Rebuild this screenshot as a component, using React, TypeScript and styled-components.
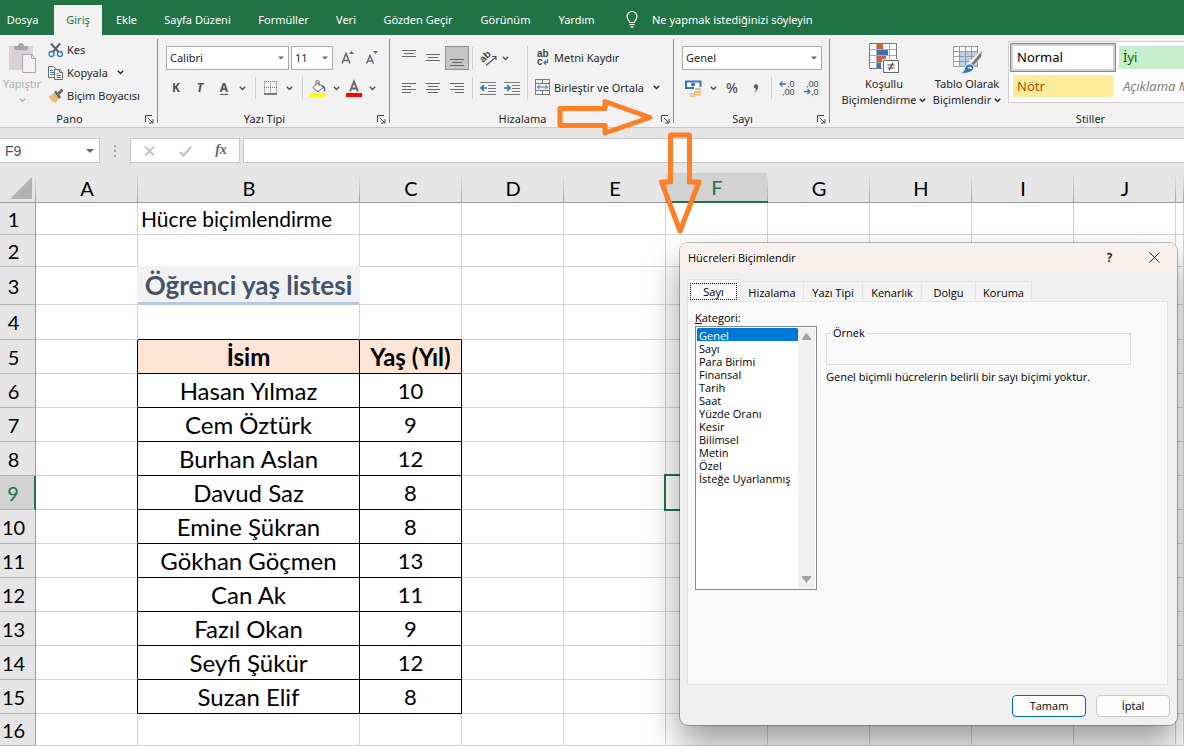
import React from 'react';
import styled, { createGlobalStyle, css } from 'styled-components';

const UI = '"Open Sans", "Noto Sans", sans-serif';
const RIBBON = '"Noto Sans", "Open Sans", sans-serif';
const SHEET = 'Lato, "Open Sans", sans-serif';
const GREEN = '#217346';

const Global = createGlobalStyle`
  *, *::before, *::after { box-sizing: border-box; }
  body { margin: 0; background: #e6e6e6; font-family: ${UI}; font-size: 11px; color: #262626; }
  button, input, select { font: inherit; color: inherit; }
  svg { display: block; flex: none; overflow: visible; }
`;

const Page = styled.div`
  position: relative;
  display: flex;
  flex-direction: column;
  min-height: 100vh;
  overflow: hidden;
`;

/* Menu tabs */
const TabBar = styled.nav`
  display: flex;
  align-items: flex-end;
  height: 35px;
  background: ${GREEN};
  color: #fff;
  font-family: ${RIBBON};
`;
const Tab = styled.button<{ $w: number; $active?: boolean; $first?: boolean }>`
  width: ${p => p.$w}px;
  height: 30px;
  margin-right: ${p => (p.$first ? 9 : 0)}px;
  padding: 0 0 2px;
  border: 0;
  flex: none;
  white-space: nowrap;
  text-align: center;
  background: ${p => (p.$active ? '#f2f2f2' : 'transparent')};
  color: ${p => (p.$active ? GREEN : '#fff')};
`;
const TellMe = styled.button`
  display: flex;
  align-items: center;
  gap: 14px;
  height: 30px;
  margin-left: 17px;
  padding: 0 0 2px;
  border: 0;
  background: none;
  color: #fff;
  white-space: nowrap;
`;

/* Ribbon */
const Ribbon = styled.section`
  display: flex;
  height: 93px;
  background: #f2f2f2;
  border-bottom: 1px solid #c9c9c9;
  font-family: ${RIBBON};
  overflow: hidden;
`;
const Group = styled.div<{ $w: number }>`
  display: flex;
  flex-direction: column;
  flex: none;
  width: ${p => p.$w}px;
  padding-top: 4px;
`;
const GroupBody = styled.div<{ $pad?: number }>`
  display: flex;
  height: 72px;
  padding-left: ${p => p.$pad ?? 0}px;
`;
const GroupFoot = styled.div`
  display: flex;
  align-items: center;
  height: 16px;
  padding-right: 3px;
  line-height: 16px;
`;
const GroupName = styled.span`
  flex: 1;
  padding-right: 6px;
  text-align: center;
`;
const GroupLine = styled.div`
  flex: none;
  width: 1px;
  margin: 4px 0;
  background: #8c8c8c;
`;
const Rows = styled.div`
  display: flex;
  flex-direction: column;
  gap: 6px;
  padding-top: 7px;
`;
const Row = styled.div<{ $pad?: number }>`
  display: flex;
  align-items: center;
  height: 24px;
  padding-left: ${p => p.$pad ?? 0}px;
`;
const ToolButton = styled.button<{ $w?: number; $on?: boolean }>`
  display: flex;
  align-items: center;
  justify-content: center;
  flex: none;
  width: ${p => p.$w ?? 24}px;
  height: 24px;
  padding: 0;
  border: 1px solid ${p => (p.$on ? '#8f8f8f' : 'transparent')};
  background: ${p => (p.$on ? '#c6c6c6' : 'none')};
  color: #505050;
`;
const Glyph = styled.span<{ $italic?: boolean; $line?: boolean; $light?: boolean }>`
  font-size: ${p => (p.$light ? 14 : 12)}px;
  line-height: 16px;
  font-weight: ${p => (p.$light ? 500 : 700)};
  font-style: ${p => (p.$italic ? 'italic' : 'normal')};
  ${p => p.$line && css`height: 14px; line-height: 13px; border-bottom: 1px solid #505050;`}
`;
const ThinLine = styled.div<{ $tall?: boolean }>`
  flex: none;
  width: 1px;
  height: ${p => (p.$tall ? 54 : 22)}px;
  margin: ${p => (p.$tall ? '7px 7px 0 3px' : '0 3px')};
  background: #d0d0d0;
`;
const Spacer = styled.div`
  width: 4px;
`;
const TextButton = styled.button<{ $h?: number }>`
  display: flex;
  align-items: center;
  gap: 3px;
  height: ${p => p.$h ?? 24}px;
  padding: 0 0 2px;
  border: 0;
  background: none;
  white-space: nowrap;
`;
const ChevronSlot = styled.span`
  margin-left: 6px;
`;
const BigButton = styled.button<{ $w: number; $muted?: boolean }>`
  display: flex;
  flex-direction: column;
  align-items: center;
  flex: none;
  width: ${p => p.$w}px;
  height: 72px;
  padding: 4px 0 0;
  border: 0;
  background: none;
  line-height: 16px;
  white-space: nowrap;
  color: ${p => (p.$muted ? '#b1b1b1' : 'inherit')};
  & > svg { margin-bottom: 2px; }
`;
const BigLine = styled.span`
  display: flex;
  align-items: center;
  gap: 3px;
  height: 16px;
`;
const ClipColumn = styled.div`
  display: flex;
  flex-direction: column;
  padding-left: 4px;
`;

/* Drop-downs */
const SelectWrap = styled.span<{ $w: number }>`
  display: grid;
  align-items: center;
  flex: none;
  width: ${p => p.$w}px;
  height: 24px;
  margin-right: 2px;
  border: 1px solid #ababab;
  background: #fff;
  & > * { grid-area: 1 / 1; }
  & > svg { justify-self: end; margin-right: 4px; pointer-events: none; }
`;
const PlainSelect = styled.select`
  appearance: none;
  width: 100%;
  height: 22px;
  padding: 0 3px 2px;
  border: 0;
  background: none;
  outline: none;
`;

/* Style gallery */
const Gallery = styled.div`
  display: grid;
  grid-template-columns: 106px 1fr;
  grid-template-rows: 29px 28px;
  flex: 1;
  height: 62px;
  margin: 2px 0 0 3px;
  padding: 1px;
  border: 1px solid #d0d0d0;
  background: #fff;
`;
const StyleCell = styled.button<{ $bg: string; $fg: string; $picked?: boolean; $italic?: boolean }>`
  margin: ${p => (p.$picked ? '0' : '3px')};
  padding: 0 0 1px 4px;
  border: 0;
  background: ${p => p.$bg};
  color: ${p => p.$fg};
  font-size: 13px;
  line-height: 18px;
  font-style: ${p => (p.$italic ? 'italic' : 'normal')};
  text-align: left;
  white-space: nowrap;
  ${p => p.$picked && css`
    border: 1px solid #8a8a8a;
    box-shadow: inset 0 0 0 2px #d0d0d0;
    padding-left: 6px;
  `}
`;

/* Formula bar */
const FormulaBar = styled.div`
  display: flex;
  align-items: flex-start;
  height: 45px;
  padding-top: 10px;
  background: #e6e6e6;
`;
const NameBox = styled.label`
  display: grid;
  align-items: center;
  width: 100px;
  height: 25px;
  border: 1px solid #c6c6c6;
  border-left: 0;
  background: #fff;
  & > * { grid-area: 1 / 1; }
  & > svg { justify-self: end; margin-right: 5px; }
`;
const NameInput = styled.input`
  width: 100%;
  padding: 0 5px;
  border: 0;
  outline: 0;
  background: none;
  font-family: "Liberation Sans", sans-serif;
  font-size: 14px;
  color: #505050;
`;
const Grip = styled.div`
  display: flex;
  justify-content: center;
  align-items: center;
  width: 30px;
  height: 25px;
`;
const FormulaTools = styled.div`
  display: flex;
  justify-content: space-around;
  width: 110px;
  height: 25px;
  margin-right: 3px;
  border: 1px solid #c6c6c6;
  background: #fff;
`;
const FormulaInput = styled.input`
  flex: 1;
  min-width: 0;
  height: 25px;
  border: 1px solid #c6c6c6;
  border-right: 0;
  background: #fff;
  outline: 0;
`;
const Fx = styled.span`
  padding-bottom: 2px;
  font: italic 700 14px/18px "Liberation Serif", serif;
  color: #666;
`;

/* Sheet */
const Sheet = styled.table`
  width: 100%;
  table-layout: fixed;
  border-collapse: separate;
  border-spacing: 0;
  background: #fff;
  font-family: ${SHEET};
  font-size: 22px;
  line-height: 28px;
  color: #000;
`;
const Col = styled.col<{ $w?: number }>`
  width: ${p => (p.$w ? `${p.$w}px` : 'auto')};
`;
const ColHead = styled.th<{ $on?: boolean }>`
  height: 30px;
  padding: 0;
  font-size: 20px;
  font-weight: 400;
  background: linear-gradient(#e6e6e6, #a6a6a6) right / 1px 100% no-repeat ${p => (p.$on ? '#d2d2d2' : '#e6e6e6')};
  border-bottom: ${p => (p.$on ? `2px solid ${GREEN}` : '1px solid #9b9b9b')};
  color: ${p => (p.$on ? GREEN : '#000')};
`;
const Corner = styled.td`
  padding: 0 0 3px 10px;
  vertical-align: bottom;
  background: linear-gradient(#e6e6e6, #a6a6a6) right / 1px 100% no-repeat #e6e6e6;
  border-bottom: 1px solid #9b9b9b;
`;
const RowHead = styled.th<{ $on?: boolean }>`
  padding: 0 8px 0 0;
  font-size: 20px;
  font-weight: 400;
  vertical-align: middle;
  background: ${p => (p.$on ? '#d2d2d2' : '#e6e6e6')};
  border-right: ${p => (p.$on ? `2px solid ${GREEN}` : '1px solid #9b9b9b')};
  border-bottom: 1px solid #b5b5b5;
  color: ${p => (p.$on ? GREEN : '#000')};
`;
const SheetRow = styled.tr<{ $h: number }>`
  height: ${p => p.$h}px;
`;
type Kind = 'plain' | 'text' | 'title' | 'head' | 'name' | 'age' | 'above' | 'beside' | 'clear' | 'clearUp' | 'active';
const kinds = {
  plain: css``,
  text: css`padding-left: 3px; text-align: left; font-size: 21px;`,
  title: css`
    background: #f2f2f2;
    border-right-color: #f2f2f2;
    border-bottom: 3px solid #b4c9e2;
    color: #44546a;
    font-size: 26px;
    font-weight: 700;
  `,
  head: css`background: #fce4d6; border-color: #000; font-size: 24px; font-weight: 700;`,
  name: css`border-color: #000; font-size: 24px;`,
  age: css`border-color: #000;`,
  above: css`border-bottom-color: #000;`,
  beside: css`border-right-color: #000;`,
  clear: css`border-right-color: #f2f2f2;`,
  clearUp: css`border-bottom-color: #f2f2f2;`,
  active: css`
    position: relative;
    &::after {
      content: '';
      position: absolute;
      inset: -2px;
      border: 2px solid ${GREEN};
    }
  `,
};
const Cell = styled.td<{ $kind: Kind }>`
  padding: 0;
  border: 0 solid #d4d4d4;
  border-right-width: 1px;
  border-bottom-width: 1px;
  text-align: center;
  white-space: nowrap;
  ${p => kinds[p.$kind]}
`;

/* Dialog */
const Dialog = styled.section`
  position: absolute;
  top: 243px;
  left: 680px;
  display: flex;
  flex-direction: column;
  width: 497px;
  height: 482px;
  border-radius: 8px;
  background: #f0f0f0;
  color: #000;
  box-shadow: 0 0 0 1px rgba(0, 0, 0, 0.25), 0 18px 34px rgba(0, 0, 0, 0.4);
  overflow: clip;
`;
const DialogTitle = styled.header`
  display: flex;
  align-items: center;
  height: 30px;
  padding: 0 0 2px 8px;
  background: #f9f1ed;
`;
const TitleText = styled.h2`
  flex: 1;
  margin: 0;
  font-size: 11px;
  font-weight: 400;
`;
const TitleButton = styled.button`
  display: flex;
  align-items: center;
  justify-content: center;
  width: 45px;
  height: 28px;
  padding: 0;
  border: 0;
  background: none;
  font-weight: 600;
  font-size: 12px;
`;
const DialogTabs = styled.div`
  display: flex;
  align-items: flex-end;
  height: 28px;
  padding-left: 7px;
`;
const DialogTab = styled.button<{ $w: number; $on?: boolean }>`
  width: ${p => p.$w}px;
  height: ${p => (p.$on ? 22 : 20)}px;
  padding: ${p => (p.$on ? '2px 3px 1px 2px' : '2px 0 0')};
  border: 1px solid #e5e5e5;
  border-bottom: 0;
  border-left-width: ${p => (p.$on ? 1 : 0)}px;
  background: ${p => (p.$on ? '#f9f9f9' : '#f3f3f3')};
`;
const FocusRing = styled.span`
  display: block;
  height: 17px;
  line-height: 15px;
  border: 1px dotted #000;
`;
const Panel = styled.div`
  display: flex;
  flex: 1;
  gap: 9px;
  margin: 0 9px 0 7px;
  padding: 8px 7px;
  border: 1px solid #e2e2e2;
  background: #f9f9f9;
`;
const ListColumn = styled.div`
  display: flex;
  flex-direction: column;
  width: 122px;
  flex: none;
`;
const ListLabel = styled.label`
  line-height: 16px;
  &::first-letter { text-decoration: underline; }
`;
const ListFrame = styled.div`
  display: flex;
  height: 264px;
  padding: 1px;
  border: 1px solid #828790;
  background: #fff;
`;
const ListBox = styled.select`
  flex: 1;
  min-width: 0;
  height: 260px;
  padding: 0;
  border: 0;
  outline: 0;
  background: #fff;
  overflow: hidden;
  scrollbar-width: none;
`;
const ListItem = styled.option`
  min-height: 13px;
  height: 13px;
  padding: 0 2px;
  line-height: 13px;
  &:checked { background: #0078d7 linear-gradient(#0078d7, #0078d7); color: #fff; }
`;
const ScrollTrack = styled.div`
  display: flex;
  flex-direction: column;
  justify-content: space-between;
  align-items: center;
  width: 17px;
  padding: 5px 0;
  background: #f0f0f0;
`;
const Side = styled.div`
  flex: 1;
  padding-top: 15px;
`;
const Sample = styled.fieldset`
  width: 305px;
  height: 40px;
  margin: 0;
  padding: 0 4px;
  border: 1px solid #dcdcdc;
`;
const SampleName = styled.legend`
  padding: 0 2px;
  line-height: 16px;
`;
const Note = styled.p`
  margin: 4px 0 0;
  line-height: 16px;
  white-space: nowrap;
`;
const DialogFoot = styled.footer`
  display: flex;
  justify-content: flex-end;
  align-items: flex-start;
  gap: 10px;
  height: 40px;
  padding: 10px 7px 0 0;
`;
const DialogButton = styled.button<{ $primary?: boolean }>`
  width: 74px;
  height: 22px;
  padding: 0 0 2px;
  border: 1px solid ${p => (p.$primary ? '#0067c0' : '#c8c8c8')};
  border-radius: 4px;
  background: #fdfdfd;
`;
const Arrows = styled.svg`
  position: absolute;
  top: 0;
  left: 0;
  pointer-events: none;
`;

const Chevron = () => (
  <svg width="7" height="5" viewBox="0 0 7 5" fill="none" stroke="currentColor" strokeWidth="1.4">
    <path d="M.8.8 3.5 3.5 6.2.8" />
  </svg>
);
const Caret = ({ size = 7 }: { size?: number }) => (
  <svg width={size} height="4" viewBox="0 0 8 4"><path d="M0 0h8L4 4z" fill="#666" /></svg>
);
const Launcher = ({ label }: { label: string }) => (
  <ToolButton $w={9} aria-label={label}>
    <svg width="9" height="9" viewBox="0 0 9 9" fill="none" stroke="#444">
      <path d="M.5 7V.5H7M3 3l4.5 4.5M8 4v4H4" />
    </svg>
  </ToolButton>
);
const Lines = ({ xs, top }: { xs: [number, number][]; top: number }) => (
  <svg width="16" height="16" viewBox="0 0 16 16" stroke="#666">
    {xs.map(([a, b], i) => <path key={i} d={`M${a} ${top + i * 3 + 0.5}H${b}`} />)}
  </svg>
);
const Indent = ({ out }: { out?: boolean }) => (
  <svg width="16" height="14" viewBox="0 0 16 14" fill="none">
    <path d="M0 1.500h16M8 4.500h8M8 7.500h8M8 10.500h8M0 13.500h16" stroke="#777" />
    <path d={out ? 'M7 7H2M4 4 1 7l3 3' : 'M0 7h5M3 4l3 3-3 3'} stroke="#2e75b6" strokeWidth="1.7" />
  </svg>
);
const small = { fontFamily: '"Liberation Sans", sans-serif', fill: '#444' };

const PasteIcon = () => (
  <svg width="30" height="31" viewBox="0 0 30 31">
    <path d="M2 3h24v24H2z" fill="#d9d3d8" />
    <path d="M7 3h4c0-4 6-4 6 0h4v4H7z" fill="#a9a6aa" />
    <path d="M15.500 11.500h9l4 4v14h-13z" fill="#f4f1f5" stroke="#a9a6aa" />
    <path d="M24.500 11.500v4h4" fill="none" stroke="#a9a6aa" />
  </svg>
);
const CutIcon = () => (
  <svg width="16" height="16" viewBox="0 0 16 16" fill="none">
    <path d="M3 1.500 10.500 10M12 1.500 5 10" stroke="#666" strokeWidth="2.200" />
    <circle cx="3.500" cy="12" r="2.500" stroke="#3a74b5" strokeWidth="1.300" />
    <circle cx="12" cy="12" r="2.500" stroke="#3a74b5" strokeWidth="1.300" />
  </svg>
);
const CopyIcon = () => (
  <svg width="16" height="16" viewBox="0 0 16 16" fill="#fff">
    <path d="M.5 1.500h5l3 3v8h-8z" stroke="#666" />
    <path d="M2 5.500h3M2 7.500h4M2 9.500h4" stroke="#3a74b5" />
    <path d="M6.500 4.500h5l3 3v7h-8z" stroke="#666" />
    <path d="M11.500 4.500v3h3" stroke="#666" fill="none" />
    <path d="M8.500 8.500h2M8.500 10.500h4.500M8.500 12.500h4.500" stroke="#3a74b5" />
  </svg>
);
const BrushIcon = () => (
  <svg width="16" height="16" viewBox="0 0 16 16">
    <path d="M1 8.500 6 5l5 5.500L8 14.500c-3 0-6-2.500-7-6z" fill="#e8bd7c" />
    <path d="m6 4 2-1.500L13 9l-2 2z" fill="#666" />
    <path d="m9.500 4.500 4-4 2 2-4 4.500z" fill="#666" />
  </svg>
);
const BorderIcon = () => (
  <svg width="14" height="14" viewBox="0 0 14 14" fill="none" stroke="#777">
    <path d="M.5.5v12M6.500.5v12M12.500.5v12M0 .5h13M0 6.500h13" strokeDasharray="1 1" />
    <path d="M0 13h13" stroke="#555" strokeWidth="1.500" />
  </svg>
);
const FillIcon = () => (
  <svg width="17" height="17" viewBox="0 0 17 17" fill="none">
    <path d="M8 2.500 13 7.500 8 12 3 7.500z" fill="#fff" stroke="#666" />
    <path d="M6 5V1.500c0-1.500 3-1.500 3 0V6" stroke="#666" />
    <path d="M11 5c3 0 5 2 4.500 6-.5 1-1.500.5-1.500-.5 0-2-1-3-3-5.500z" fill="#3a74b5" />
    <path d="M0 13h16v4H0z" fill="#ffff00" />
  </svg>
);
const FontColorIcon = () => (
  <svg width="16" height="17" viewBox="0 0 16 17">
    <path d="m4 11.500 4-10 4 10M5.500 8.500h5" fill="none" stroke="#666" strokeWidth="1.900" />
    <path d="M0 13h16v4H0z" fill="#f00" />
  </svg>
);
const GrowIcon = ({ down }: { down?: boolean }) => (
  <svg width="14" height="16" viewBox="0 0 14 16" fill="none">
    <path d={down ? 'm2.500 13.500 3.500-8 3.500 8M4 11h4' : 'm2 13.500 4-10 4 10M3.500 10.500h5'} stroke="#666" strokeWidth="1.500" />
    <path d={down ? 'M9 1h5l-2.500 3z' : 'M9 4h5l-2.500-3z'} fill="#3a74b5" />
  </svg>
);
const OrientIcon = () => (
  <svg width="17" height="17" viewBox="0 0 17 17">
    <text x="0" y="11" fontSize="10" fontWeight="700" transform="rotate(-45 4 8)" {...small}>ab</text>
    <path d="m6 15.500 10-8.500M12 6.500h4V10" fill="none" stroke="#555" strokeWidth="1.200" />
  </svg>
);
const WrapIcon = () => (
  <svg width="16" height="18" viewBox="0 0 16 18">
    <text x="2" y="9" fontSize="10" fontWeight="700" {...small}>ab</text>
    <text x="2" y="17" fontSize="10" fontWeight="700" {...small}>c</text>
    <path d="M12.500 11v3.500H9M11 12.500l-2 2 2 2" fill="none" stroke="#3a74b5" strokeWidth="1.200" />
  </svg>
);
const MergeIcon = () => (
  <svg width="16" height="16" viewBox="0 0 16 16" fill="none">
    <path d="M.5.500h14v15H.5zM.5 4.500h14M.5 11.500h14M7.500.500v4M7.500 11.500v4" stroke="#777" />
    <path d="M2.500 8h10M4.500 6l-2 2 2 2M10.500 6l2 2-2 2" stroke="#3a74b5" />
  </svg>
);
const MoneyIcon = () => (
  <svg width="18" height="17" viewBox="0 0 18 17">
    <path d="M1 1.500h14.500V8H1z" fill="#fff" stroke="#3a74b5" strokeWidth="2" />
    <circle cx="8" cy="4.500" r="2" fill="#3a74b5" />
    <path d="M9 7h8v9H9zM4 12h6v5H4z" fill="#f2f2f2" />
    <path d="M10 8h6v2h-6zM9 11h7v2H9zM4 13h6v1.500H4zM9 14h7v1.500H9zM5 15.500h5V17H5z" fill="#e8bd7c" />
  </svg>
);
const CommaIcon = () => (
  <svg width="6" height="9" viewBox="0 0 6 9" fill="#606060">
    <circle cx="3" cy="2.500" r="2.200" />
    <path d="M5.200 2.500c0 3-1.500 5-4.200 6 1.500-1.500 2-2.500 2-4z" />
  </svg>
);
const DecimalIcon = ({ less }: { less?: boolean }) => (
  <svg width="16" height="16" viewBox="0 0 16 16">
    <text x={less ? 3 : 8} y="7" fontSize="9" {...small}>{less ? ',00' : ',0'}</text>
    <text x={less ? 8 : 3} y="15" fontSize="9" {...small}>{less ? ',0' : ',00'}</text>
    <path d={less ? 'M1 11.500h6M4.500 9 7 11.500 4.500 14' : 'M7 4H1M3.500 1.500 1 4l2.500 2.500'} fill="none" stroke="#3a74b5" strokeWidth="1.300" />
  </svg>
);
const ConditionalIcon = () => (
  <svg width="30" height="31" viewBox="0 0 30 31">
    <path d="M.5.500h27v25H.5z" fill="#fff" stroke="#777" />
    <path d="M8 1h6v6H8zM8 13h9v6H8z" fill="#d0603f" />
    <path d="M8 7h11v5H8zM8 19h4v6H8z" fill="#3a74b5" />
    <path d="M7.500 1v24M20.500 1v24M1 6.500h26M1 12.500h26M1 19.500h26" stroke="#aaa" fill="none" />
    <path d="M13 16h17v15H13z" fill="#f2f2f2" />
    <path d="M14.500 17.500h15v12h-15z" fill="#fff" stroke="#666" />
    <path d="M18.500 22h7M18.500 25h7M24 19.500l-4 8" stroke="#444" strokeWidth="1.200" />
  </svg>
);
const TableIcon = () => (
  <svg width="30" height="31" viewBox="0 0 30 31">
    <path d="M1.500 3.500h24v20h-24z" fill="#fff" />
    <path d="M8 9h18v15H8z" fill="#bdd0e9" />
    <path d="M1.500 3.500h24v20h-24zM7.500 3.500v20M13.500 3.500v20M19.500 3.500v20M1.500 8.500h24M1.500 13.500h24M1.500 18.500h24" fill="none" stroke="#9a9a9a" />
    <path d="m29 7-2 10-7 8-5-4z" fill="#f2f2f2" />
    <path d="m30 8-1 6-8 9-2-2z" fill="#777" />
    <path d="M18 21c3 0 5 3 3 6-3 3-8 4-13 3 4-1 4-3 5-6 1-2 3-3 5-3z" fill="#3a74b5" stroke="#f2f2f2" />
    <path d="M16 25c2-1 3 0 3 1" fill="none" stroke="#fff" strokeWidth="1.500" />
  </svg>
);

const menu: [string, number][] = [
  ['Ekle', 49], ['Sayfa Düzeni', 93], ['Formüller', 79], ['Veri', 46],
  ['Gözden Geçir', 98], ['Görünüm', 77], ['Yardım', 65],
];
const columns = ['A', 'B', 'C', 'D', 'E', 'F', 'G', 'H', 'I', 'J', ''];
const heights = [32, 32, 38, 35, 34, 34, 34, 34, 34, 34, 34, 34, 34, 34, 34, 32];
const people: [string, number][] = [
  ['Hasan Yılmaz', 10], ['Cem Öztürk', 9], ['Burhan Aslan', 12], ['Davud Saz', 8], ['Emine Şükran', 8],
  ['Gökhan Göçmen', 13], ['Can Ak', 11], ['Fazıl Okan', 9], ['Seyfi Şükür', 12], ['Suzan Elif', 8],
];
const categories = ['Genel', 'Sayı', 'Para Birimi', 'Finansal', 'Tarih', 'Saat', 'Yüzde Oranı', 'Kesir', 'Bilimsel', 'Metin', 'Özel', 'İsteğe Uyarlanmış'];
const dialogTabs: [string, number][] = [['Hizalama', 63], ['Yazı Tipi', 59], ['Kenarlık', 59], ['Dolgu', 54], ['Koruma', 56]];

function cellAt(row: number, col: string): { kind: Kind; value?: string | number } {
  if (row === 1 && col === 'B') return { kind: 'text', value: 'Hücre biçimlendirme' };
  if (row === 2 && col === 'B') return { kind: 'clearUp' };
  if (row === 3 && col === 'A') return { kind: 'clear' };
  if (row === 3 && col === 'B') return { kind: 'title', value: 'Öğrenci yaş listesi' };
  if (row === 4 && (col === 'B' || col === 'C')) return { kind: 'above' };
  if (row >= 5 && row <= 15) {
    if (col === 'A') return { kind: 'beside' };
    if (col === 'B') return row === 5 ? { kind: 'head', value: 'İsim' } : { kind: 'name', value: people[row - 6][0] };
    if (col === 'C') return row === 5 ? { kind: 'head', value: 'Yaş (Yıl)' } : { kind: 'age', value: people[row - 6][1] };
  }
  if (row === 9 && col === 'F') return { kind: 'active' };
  return { kind: 'plain' };
}

const wide: [number, number][] = [[1, 15], [3, 13], [1, 15]];

const Dropdown = ({ w, label, value }: { w: number; label: string; value: string }) => (
  <SelectWrap $w={w}>
    <PlainSelect aria-label={label} defaultValue={value}><option>{value}</option></PlainSelect>
    <Caret size={6} />
  </SelectWrap>
);
const More = ({ w = 12, label }: { w?: number; label: string }) => (
  <ToolButton $w={w} aria-label={label}><Chevron /></ToolButton>
);

export default function App() {
  return (
    <Page>
      <Global />
      <TabBar>
        <Tab $w={45} $first>Dosya</Tab>
        <Tab $w={48} $active>Giriş</Tab>
        {menu.map(([name, w]) => <Tab key={name} $w={w}>{name}</Tab>)}
        <TellMe>
          <svg width="12" height="17" viewBox="0 0 12 17" fill="none" stroke="#fff" strokeWidth="1.200">
            <path d="M3.500 11.500C3.500 9 1 8.500 1 5.500a5 5 0 0 1 10 0c0 3-2.500 3.500-2.500 6zM3.500 13.500h5M4.500 15.800h3" />
          </svg>
          Ne yapmak istediğinizi söyleyin
        </TellMe>
      </TabBar>

      <Ribbon>
        <Group $w={157}>
          <GroupBody>
            <BigButton $w={44} $muted>
              <PasteIcon />
              <BigLine>Yapıştır</BigLine>
              <BigLine><Chevron /></BigLine>
            </BigButton>
            <ClipColumn>
              <TextButton $h={23}><CutIcon />Kes</TextButton>
              <TextButton $h={23}><CopyIcon />Kopyala<ChevronSlot><Chevron /></ChevronSlot></TextButton>
              <TextButton $h={23}><BrushIcon />Biçim Boyacısı</TextButton>
            </ClipColumn>
          </GroupBody>
          <GroupFoot><GroupName>Pano</GroupName><Launcher label="Pano seçenekleri" /></GroupFoot>
        </Group>
        <GroupLine />
        <Group $w={231}>
          <GroupBody $pad={6}>
            <Rows>
              <Row $pad={2}>
                <Dropdown w={123} label="Yazı tipi" value="Calibri" />
                <Dropdown w={42} label="Boyut" value="11" />
                <ToolButton aria-label="Büyüt"><GrowIcon /></ToolButton>
                <ToolButton aria-label="Küçült"><GrowIcon down /></ToolButton>
              </Row>
              <Row>
                <ToolButton><Glyph>K</Glyph></ToolButton>
                <ToolButton><Glyph $italic>T</Glyph></ToolButton>
                <ToolButton><Glyph $line>A</Glyph></ToolButton>
                <More label="Altı çizili seçenekleri" />
                <Spacer /><ThinLine />
                <ToolButton aria-label="Kenarlık"><BorderIcon /></ToolButton>
                <More label="Kenarlık seçenekleri" />
                <Spacer /><ThinLine />
                <ToolButton aria-label="Dolgu rengi"><FillIcon /></ToolButton>
                <More label="Dolgu seçenekleri" />
                <ToolButton aria-label="Yazı rengi"><FontColorIcon /></ToolButton>
                <More label="Yazı rengi seçenekleri" />
              </Row>
            </Rows>
          </GroupBody>
          <GroupFoot><GroupName>Yazı Tipi</GroupName><Launcher label="Yazı tipi ayarları" /></GroupFoot>
        </Group>
        <GroupLine />
        <Group $w={283}>
          <GroupBody $pad={7}>
            <Rows>
              <Row>
                <ToolButton aria-label="Üste hizala"><Lines xs={wide} top={0} /></ToolButton>
                <ToolButton aria-label="Ortaya hizala"><Lines xs={wide} top={4} /></ToolButton>
                <ToolButton aria-label="Alta hizala" $on><Lines xs={wide} top={9} /></ToolButton>
                <ThinLine />
                <ToolButton aria-label="Yönlendirme"><OrientIcon /></ToolButton>
                <More w={10} label="Yönlendirme seçenekleri" />
              </Row>
              <Row>
                <ToolButton aria-label="Sola hizala"><Lines xs={[[1, 15], [1, 10], [1, 15], [1, 10]]} top={3} /></ToolButton>
                <ToolButton aria-label="Ortala"><Lines xs={[[1, 15], [3, 13], [1, 15], [3, 13]]} top={3} /></ToolButton>
                <ToolButton aria-label="Sağa hizala"><Lines xs={[[1, 15], [6, 15], [1, 15], [6, 15]]} top={3} /></ToolButton>
                <ThinLine />
                <ToolButton aria-label="Girintiyi azalt"><Indent out /></ToolButton>
                <ToolButton aria-label="Girintiyi artır"><Indent /></ToolButton>
              </Row>
            </Rows>
            <ThinLine $tall />
            <Rows>
              <TextButton><WrapIcon />Metni Kaydır</TextButton>
              <TextButton><MergeIcon />Birleştir ve Ortala<ChevronSlot><Chevron /></ChevronSlot></TextButton>
            </Rows>
          </GroupBody>
          <GroupFoot><GroupName>Hizalama</GroupName><Launcher label="Hizalama ayarları" /></GroupFoot>
        </Group>
        <GroupLine />
        <Group $w={155}>
          <GroupBody $pad={8}>
            <Rows>
              <Row><Dropdown w={140} label="Sayı biçimi" value="Genel" /></Row>
              <Row>
                <ToolButton aria-label="Para birimi"><MoneyIcon /></ToolButton>
                <More w={14} label="Para birimi seçenekleri" />
                <ToolButton><Glyph $light>%</Glyph></ToolButton>
                <ToolButton aria-label="Binlik ayırıcı"><CommaIcon /></ToolButton>
                <ThinLine />
                <ToolButton aria-label="Ondalık artır"><DecimalIcon /></ToolButton>
                <ToolButton aria-label="Ondalık azalt"><DecimalIcon less /></ToolButton>
              </Row>
            </Rows>
          </GroupBody>
          <GroupFoot><GroupName>Sayı</GroupName><Launcher label="Sayı ayarları" /></GroupFoot>
        </Group>
        <GroupLine />
        <Group $w={530}>
          <GroupBody $pad={9}>
            <BigButton $w={90}>
              <ConditionalIcon />
              <BigLine>Koşullu</BigLine>
              <BigLine>Biçimlendirme <Chevron /></BigLine>
            </BigButton>
            <BigButton $w={76}>
              <TableIcon />
              <BigLine>Tablo Olarak</BigLine>
              <BigLine>Biçimlendir <Chevron /></BigLine>
            </BigButton>
            <Gallery>
              <StyleCell $bg="#fff" $fg="#000" $picked>Normal</StyleCell>
              <StyleCell $bg="#c6efce" $fg="#006100">İyi</StyleCell>
              <StyleCell $bg="#ffeb9c" $fg="#9c5700">Nötr</StyleCell>
              <StyleCell $bg="#fff" $fg="#7f7f7f" $italic>Açıklama Metni</StyleCell>
            </Gallery>
          </GroupBody>
          <GroupFoot><GroupName>Stiller</GroupName></GroupFoot>
        </Group>
      </Ribbon>

      <FormulaBar>
        <NameBox><NameInput aria-label="Ad kutusu" defaultValue="F9" /><Caret size={8} /></NameBox>
        <Grip>
          <svg width="2" height="12" viewBox="0 0 2 12"><path d="M0 0h2v2H0zM0 5h2v2H0zM0 10h2v2H0z" fill="#a6a6a6" /></svg>
        </Grip>
        <FormulaTools>
          <ToolButton aria-label="İptal">
            <svg width="11" height="10" viewBox="0 0 11 10" fill="none" stroke="#c4c4c4" strokeWidth="1.800"><path d="m1 .5 9 9M10 .5l-9 9" /></svg>
          </ToolButton>
          <ToolButton aria-label="Gir">
            <svg width="13" height="11" viewBox="0 0 13 11" fill="none" stroke="#c4c4c4" strokeWidth="2.400"><path d="m1 6 3.500 3.500L12 1" /></svg>
          </ToolButton>
          <ToolButton><Fx>fx</Fx></ToolButton>
        </FormulaTools>
        <FormulaInput aria-label="Formül" />
      </FormulaBar>

      <Sheet>
        <colgroup>
          <Col $w={36} /><Col $w={102} /><Col $w={222} />
          {columns.slice(2, 10).map(c => <Col key={c} $w={102} />)}
          <Col />
        </colgroup>
        <thead>
          <tr>
            <Corner><svg width="22" height="22" viewBox="0 0 22 22"><path d="M22 0v22H0z" fill="#b2b2b2" /></svg></Corner>
            {columns.map(c => <ColHead key={c} scope="col" $on={c === 'F'}>{c}</ColHead>)}
          </tr>
        </thead>
        <tbody>
          {heights.map((h, i) => (
            <SheetRow key={i} $h={h}>
              <RowHead scope="row" $on={i === 8}>{i + 1}</RowHead>
              {columns.map(c => {
                const cell = cellAt(i + 1, c);
                return <Cell key={c} $kind={cell.kind}>{cell.value}</Cell>;
              })}
            </SheetRow>
          ))}
        </tbody>
      </Sheet>

      <Dialog role="dialog" aria-labelledby="dialog-title">
        <DialogTitle>
          <TitleText id="dialog-title">Hücreleri Biçimlendir</TitleText>
          <TitleButton>?</TitleButton>
          <TitleButton aria-label="Kapat">
            <svg width="11" height="11" viewBox="0 0 11 11" stroke="#222"><path d="m.5.500 10 10M10.500.500l-10 10" /></svg>
          </TitleButton>
        </DialogTitle>
        <DialogTabs role="tablist">
          <DialogTab role="tab" aria-selected $w={54} $on><FocusRing>Sayı</FocusRing></DialogTab>
          {dialogTabs.map(([name, w]) => <DialogTab key={name} role="tab" $w={w}>{name}</DialogTab>)}
        </DialogTabs>
        <Panel>
          <ListColumn>
            <ListLabel htmlFor="category">Kategori:</ListLabel>
            <ListFrame>
              <ListBox id="category" size={20} defaultValue="Genel">
                {categories.map(c => <ListItem key={c}>{c}</ListItem>)}
              </ListBox>
              <ScrollTrack>
                <svg width="9" height="7" viewBox="0 0 9 7"><path d="M4.500 0 9 5.500V7H0V5.500z" fill="#a3a3a3" /></svg>
                <svg width="9" height="7" viewBox="0 0 9 7"><path d="M4.500 7 9 1.500V0H0v1.500z" fill="#a3a3a3" /></svg>
              </ScrollTrack>
            </ListFrame>
          </ListColumn>
          <Side>
            <Sample><SampleName>Örnek</SampleName></Sample>
            <Note>Genel biçimli hücrelerin belirli bir sayı biçimi yoktur.</Note>
          </Side>
        </Panel>
        <DialogFoot>
          <DialogButton $primary>Tamam</DialogButton>
          <DialogButton>İptal</DialogButton>
        </DialogFoot>
      </Dialog>

      <Arrows width="720" height="240" viewBox="0 0 720 240" fill="none" stroke="#ff7f27" strokeWidth="5" strokeLinejoin="round" aria-hidden>
        <path d="M560 108.500h45v-7l45 16-45 15.500v-7.500h-45z" />
        <path d="M670.500 135h19v47h9.500l-19 49-18.500-49h9z" />
      </Arrows>
    </Page>
  );
}
